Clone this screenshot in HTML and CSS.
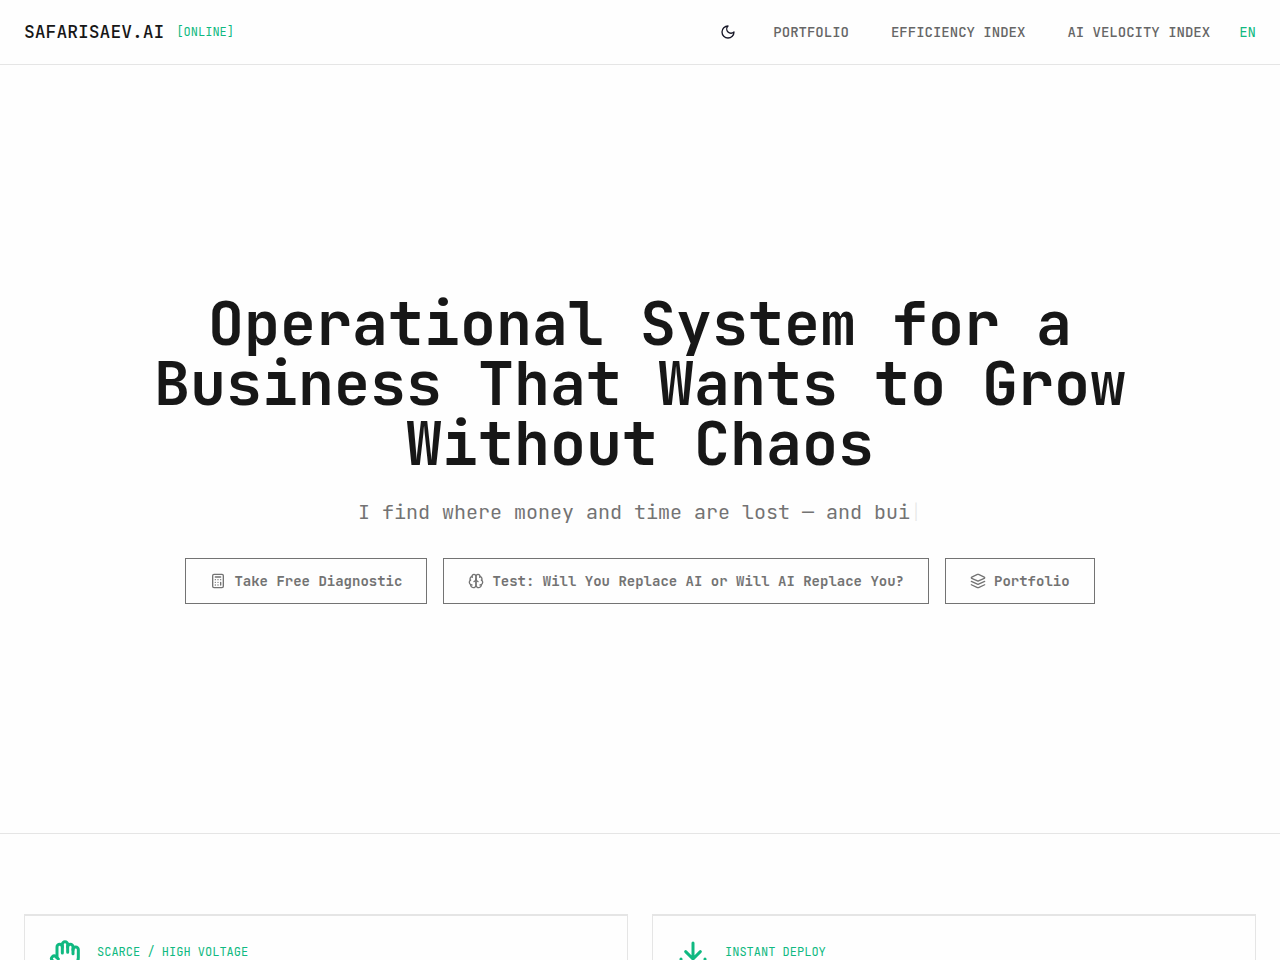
FILE: index.html
```
<!DOCTYPE html>
<html lang="en">

<head>
    <meta charset="UTF-8">
    <meta name="viewport" content="width=device-width, initial-scale=1.0">
    <title>SAFARISAEV.AI</title>
    <link rel="stylesheet" href="styles.css">
</head>

<body>
    <header class="header">
        <a class="logo" href="#">SAFARISAEV.AI</a>
        <span class="status">[ONLINE]</span>

        <div class="header-right">
            <button class="theme-btn" type="button" aria-label="Toggle theme">
                <svg class="icon" viewBox="0 0 24 24">
                    <path d="M12 3a6 6 0 0 0 9 9 9 9 0 1 1-9-9Z" />
                </svg>
            </button>
            <nav class="nav">
                <a href="#">PORTFOLIO</a>
                <a href="#">EFFICIENCY INDEX</a>
                <a href="#">AI VELOCITY INDEX</a>
            </nav>
            <button class="lang-btn" type="button">EN</button>
        </div>
    </header>

    <main>
        <section class="hero">
            <h1 class="hero-title">Operational System for a Business That Wants to Grow Without Chaos</h1>
            <p class="hero-text">I find where money and time are lost — and bui<span class="cursor">|</span></p>

            <div class="hero-actions">
                <a class="btn" href="#">
                    <svg class="icon" viewBox="0 0 24 24">
                        <rect x="4" y="2" width="16" height="20" rx="2" />
                        <path d="M8 6h8M16 14v4" />
                        <path d="M16 10h.01M12 10h.01M8 10h.01M12 14h.01M8 14h.01M12 18h.01M8 18h.01" />
                    </svg>
                    Take Free Diagnostic
                </a>
                <a class="btn" href="#">
                    <svg class="icon" viewBox="0 0 24 24">
                        <path d="M12 5a3 3 0 1 0-5.997.125 4 4 0 0 0-2.526 5.77 4 4 0 0 0 .556 6.588A4 4 0 1 0 12 18Z" />
                        <path d="M12 5a3 3 0 1 1 5.997.125 4 4 0 0 1 2.526 5.77 4 4 0 0 1-.556 6.588A4 4 0 1 1 12 18Z" />
                        <path d="M15 13a4.5 4.5 0 0 1-3-4 4.5 4.5 0 0 1-3 4" />
                        <path d="M17.599 6.5a3 3 0 0 0 .399-1.375M6.003 5.125A3 3 0 0 0 6.401 6.5" />
                        <path d="M3.477 10.896a4 4 0 0 1 .585-.396M19.938 10.5a4 4 0 0 1 .585.396" />
                        <path d="M6 18a4 4 0 0 1-1.967-.516M19.967 17.484A4 4 0 0 1 18 18" />
                    </svg>
                    Test: Will You Replace AI or Will AI Replace You?
                </a>
                <a class="btn" href="#">
                    <svg class="icon" viewBox="0 0 24 24">
                        <path d="M12.83 2.18a2 2 0 0 0-1.66 0L2.6 6.08a1 1 0 0 0 0 1.83l8.58 3.91a2 2 0 0 0 1.66 0l8.58-3.9a1 1 0 0 0 0-1.83Z" />
                        <path d="m22 12.65-9.17 4.16a2 2 0 0 1-1.66 0L2 12.65" />
                        <path d="m22 17.65-9.17 4.16a2 2 0 0 1-1.66 0L2 17.65" />
                    </svg>
                    Portfolio
                </a>
            </div>
        </section>

        <section class="cards">
            <article class="card">
                <svg class="card-icon" viewBox="0 0 24 24">
                    <path d="M18 11V6a2 2 0 0 0-4 0" />
                    <path d="M14 10V4a2 2 0 0 0-4 0v2" />
                    <path d="M10 10.5V6a2 2 0 0 0-4 0v8" />
                    <path d="M18 8a2 2 0 1 1 4 0v6a8 8 0 0 1-8 8h-2c-2.8 0-4.5-.86-5.99-2.34l-3.6-3.6a2 2 0 0 1 2.83-2.82L7 15" />
                </svg>
                <span class="card-label">SCARCE / HIGH VOLTAGE</span>
            </article>
            <article class="card">
                <svg class="card-icon" viewBox="0 0 24 24">
                    <path d="M12 3v12M6.500 9.500l5.500 5.500 5.500-5.500" />
                    <path d="M3 15v4a2 2 0 0 0 2 2h14a2 2 0 0 0 2-2v-4" />
                </svg>
                <span class="card-label">INSTANT DEPLOY</span>
            </article>
        </section>
    </main>
</body>

</html>
```
FILE: styles.css
```
* {
    margin: 0;
    padding: 0;
    box-sizing: border-box;
}

body {
    background: #fefefe;
    color: #171717;
    font-family: "JetBrains Mono", "DejaVu Sans Mono", monospace;
    font-size: 14px;
}

a {
    color: inherit;
    text-decoration: none;
}

button {
    border: none;
    background: none;
    font: inherit;
    cursor: pointer;
}

.icon,
.card-icon {
    display: block;
    flex-shrink: 0;
    fill: none;
    stroke: currentColor;
    stroke-width: 2;
    stroke-linecap: round;
    stroke-linejoin: round;
}

.icon {
    width: 16px;
    height: 16px;
}

/* header */
.header {
    display: flex;
    align-items: center;
    gap: 12px;
    min-height: 65px;
    padding: 0 24px;
    border-bottom: 1px solid #e5e5e5;
}

.logo {
    font-size: 18px;
    font-weight: 500;
    line-height: 28px;
}

.status {
    color: #10b981;
    font-size: 12px;
}

.header-right {
    display: flex;
    align-items: center;
    gap: 29px;
    margin-left: auto;
}

.theme-btn {
    padding: 8px;
    color: #171727;
}

.nav {
    display: flex;
    gap: 42px;
    color: #666666;
    font-weight: 500;
}

.lang-btn {
    color: #10b981;
}

/* hero */
.hero {
    display: flex;
    flex-direction: column;
    align-items: center;
    justify-content: center;
    min-height: calc(80vh + 1px);
    padding: 48px 24px;
    border-bottom: 1px solid #e5e5e5;
    text-align: center;
}

.hero-title {
    max-width: 1024px;
    margin-bottom: 24px;
    font-size: 60px;
    font-weight: 700;
    line-height: 60px;
}

.hero-text {
    margin-bottom: 32px;
    color: #737373;
    font-size: 20px;
    line-height: 28px;
}

.cursor {
    color: #e5e5e5;
    font-weight: 100;
}

.hero-actions {
    display: flex;
    flex-wrap: wrap;
    justify-content: center;
    gap: 16px;
}

.btn {
    display: flex;
    align-items: center;
    gap: 8px;
    padding: 12px 24px;
    border: 1px solid #737373;
    color: #737373;
    font-weight: 600;
    line-height: 20px;
}

/* cards */
.cards {
    display: grid;
    grid-template-columns: 1fr 1fr;
    gap: 24px;
    padding: 80px 24px;
}

.card {
    display: flex;
    align-items: flex-start;
    gap: 16px;
    padding: 24px;
    border: 1px solid #e5e5e5;
    box-shadow: inset 0 1px 0 #e5e5e5;
}

.card-icon {
    width: 32px;
    height: 32px;
    color: #10b981;
    stroke-width: 2.25;
}

.card-label {
    color: #10b981;
    font-size: 12px;
    line-height: 26px;
}
```
